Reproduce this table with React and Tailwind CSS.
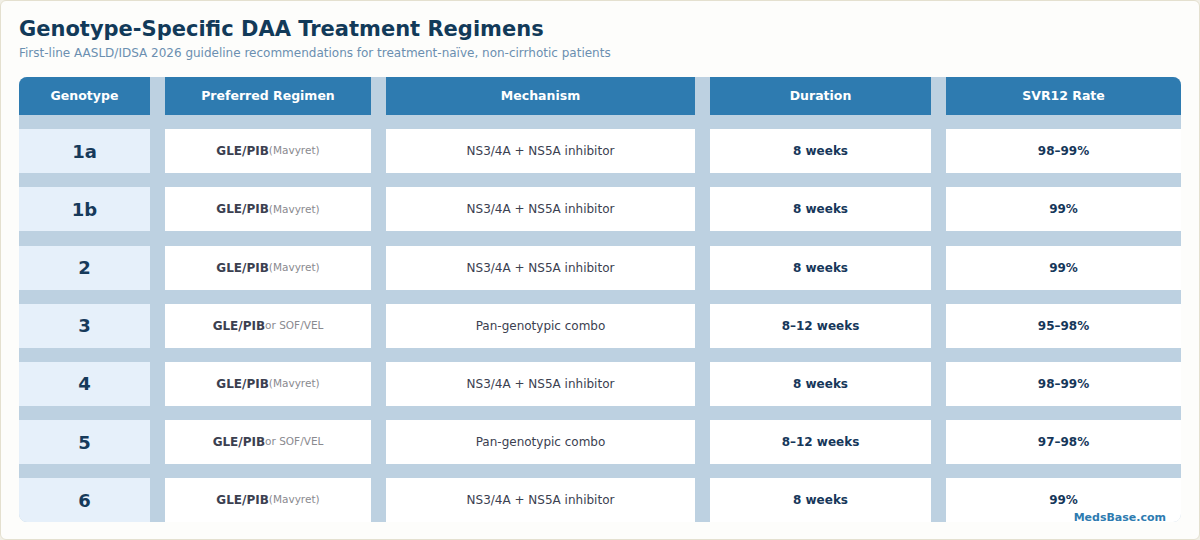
import React from 'react'

const rows = [
  { g: '1a', alt: '(Mavyret)', mech: 'NS3/4A + NS5A inhibitor', dur: '8 weeks', svr: '98–99%' },
  { g: '1b', alt: '(Mavyret)', mech: 'NS3/4A + NS5A inhibitor', dur: '8 weeks', svr: '99%' },
  { g: '2', alt: '(Mavyret)', mech: 'NS3/4A + NS5A inhibitor', dur: '8 weeks', svr: '99%' },
  { g: '3', alt: 'or SOF/VEL', mech: 'Pan-genotypic combo', dur: '8–12 weeks', svr: '95–98%' },
  { g: '4', alt: '(Mavyret)', mech: 'NS3/4A + NS5A inhibitor', dur: '8 weeks', svr: '98–99%' },
  { g: '5', alt: 'or SOF/VEL', mech: 'Pan-genotypic combo', dur: '8–12 weeks', svr: '97–98%' },
  { g: '6', alt: '(Mavyret)', mech: 'NS3/4A + NS5A inhibitor', dur: '8 weeks', svr: '99%' },
]

const headers = ['Genotype', 'Preferred Regimen', 'Mechanism', 'Duration', 'SVR12 Rate']

const App = () => {
  return (
    <div
      className="w-[1200px] h-[540px] bg-[#f1efe6]"
      style={{ fontFamily: '"DejaVu Sans", Verdana, sans-serif' }}
    >
      <div className="relative h-full rounded-[6px] border border-[#e4e0cf] bg-[#fdfdfb] px-[18px] pt-[14px]">
        {/* Heading */}
        <h1 className="text-[21px] leading-[28px] font-bold text-[#123a59]">
          Genotype-Specific DAA Treatment Regimens
        </h1>
        <p className="text-[12px] leading-[16px] text-[#6b8fb0] mt-[2px]">
          First-line AASLD/IDSA 2026 guideline recommendations for treatment-naïve, non-cirrhotic patients
        </p>

        {/* Table */}
        <div className="mt-[16px] grid grid-cols-[131px_206px_309px_221px_235px] gap-x-[15px] gap-y-[14.2px] rounded-lg overflow-hidden bg-[#bdd1e1]">
          {headers.map((h) => (
            <div
              key={h}
              className="h-[38px] flex items-center justify-center bg-[#2e7bb0] text-white text-[12.5px] font-bold"
            >
              {h}
            </div>
          ))}

          {rows.map((r, i) => (
            <React.Fragment key={i}>
              <div className="h-[44px] flex items-center justify-center bg-[#e6f0fa] text-[18px] font-bold text-[#163a5a]">
                {r.g}
              </div>
              <div className="h-[44px] flex items-center justify-center bg-white">
                <span className="text-[12px] font-bold text-[#3b4050]">GLE/PIB</span>
                <span className="text-[10.5px] text-[#8a8a8f]">{r.alt}</span>
              </div>
              <div className="h-[44px] flex items-center justify-center bg-white text-[12px] text-[#3b4050]">
                {r.mech}
              </div>
              <div className="h-[44px] flex items-center justify-center bg-white text-[12px] font-bold text-[#16375a]">
                {r.dur}
              </div>
              <div className="h-[44px] flex items-center justify-center bg-white text-[12px] font-bold text-[#16375a]">
                {r.svr}
              </div>
            </React.Fragment>
          ))}
        </div>

        <span className="absolute right-[33px] bottom-[13px] text-[11px] font-bold text-[#2e7bb0]">
          MedsBase.com
        </span>
      </div>
    </div>
  )
}

export default App
